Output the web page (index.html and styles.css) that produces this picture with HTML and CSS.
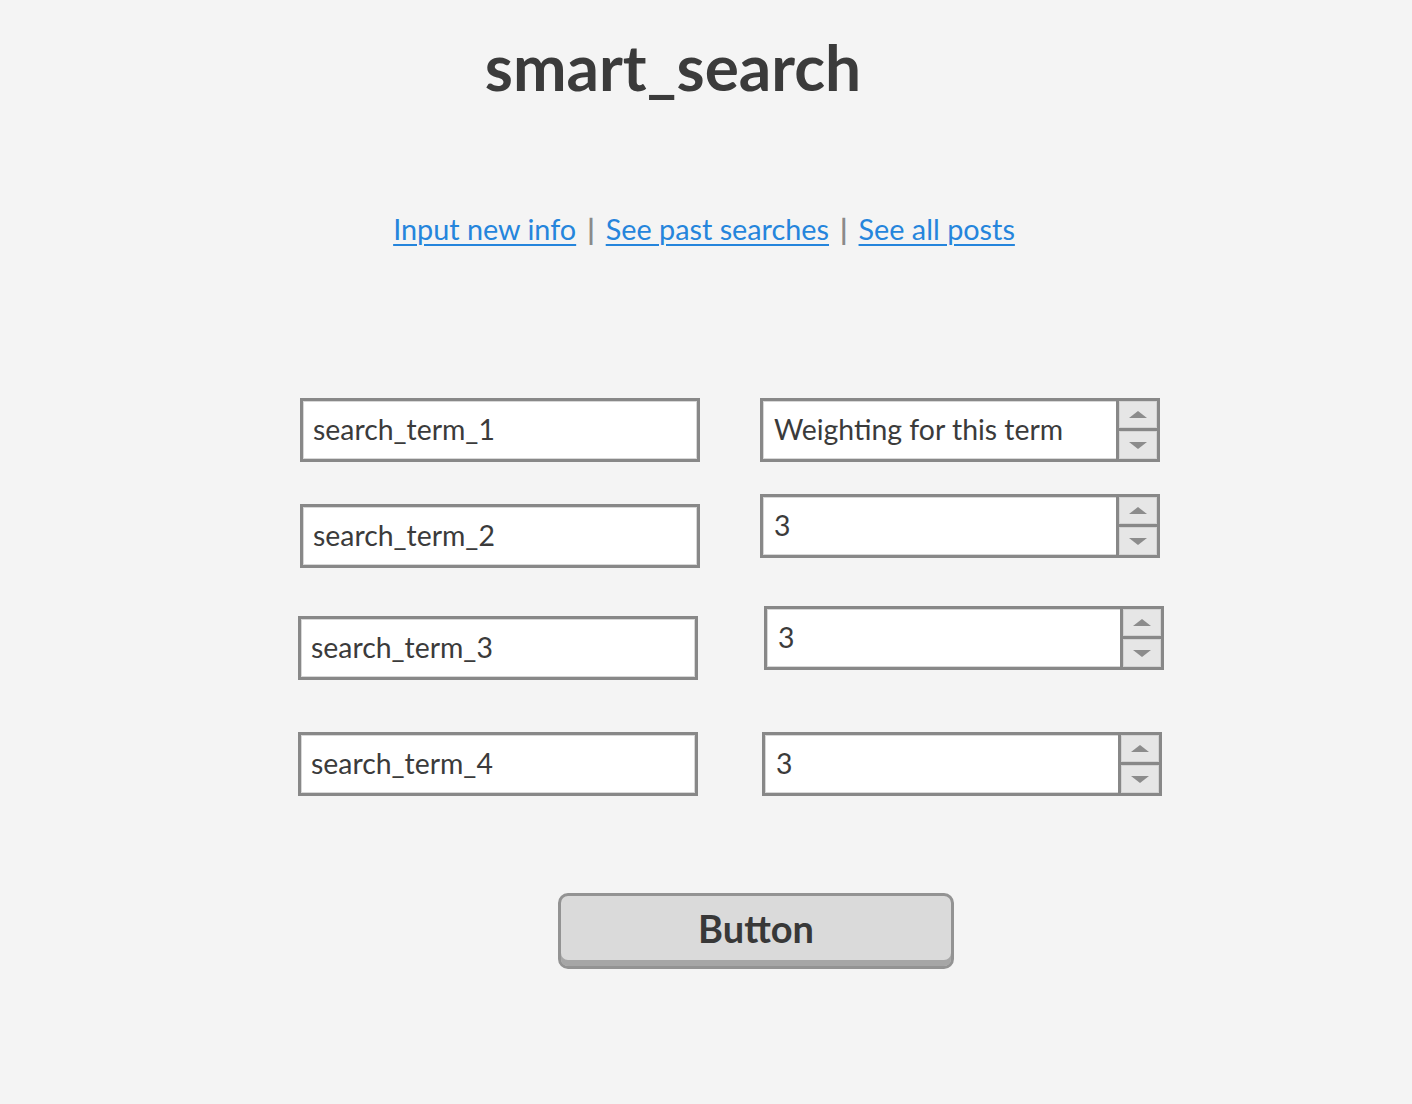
FILE: index.html
```html
<!DOCTYPE html>
<html lang="en">
<head>
<meta charset="utf-8">
<title>smart_search</title>
<link rel="stylesheet" href="styles.css">
</head>
<body>
<main class="page">
  <h1 class="title">smart_search</h1>
  <nav class="links">
    <a href="#">Input new info</a><span class="sep">|</span><a href="#">See past searches</a><span class="sep">|</span><a href="#">See all posts</a>
  </nav>
  <section class="form">
    <div class="col col-left">
      <div class="field f1">search_term_1</div>
      <div class="field f2">search_term_2</div>
      <div class="field f3">search_term_3</div>
      <div class="field f4">search_term_4</div>
    </div>
    <div class="col col-right">
      <div class="spin s1"><div class="val">Weighting for this term</div><div class="btns"><span class="up"></span><span class="down"></span></div></div>
      <div class="spin s2"><div class="val">3</div><div class="btns"><span class="up"></span><span class="down"></span></div></div>
      <div class="spin s3"><div class="val">3</div><div class="btns"><span class="up"></span><span class="down"></span></div></div>
      <div class="spin s4"><div class="val">3</div><div class="btns"><span class="up"></span><span class="down"></span></div></div>
    </div>
  </section>
  <div class="actions">
    <button class="btn" type="button">Button</button>
  </div>
</main>
</body>
</html>
```

FILE: styles.css
```css
* { box-sizing: border-box; }
html, body { margin: 0; padding: 0; }
body {
  background: #f4f4f4;
  color: #3b3b3b;
  font-family: Lato, "Open Sans", sans-serif;
  width: 1412px;
  height: 1104px;
  overflow: hidden;
}
.page { display: flex; flex-direction: column; }

.title {
  margin: 35px 0 0 0;
  padding-right: 66px;
  text-align: center;
  font-size: 64px;
  line-height: 1;
  font-weight: 700;
  color: #3b3b3b;
}

.links {
  margin-top: 116px;
  text-align: center;
  font-size: 28.8px;
  line-height: 1;
  padding-right: 4px;
}
.links a {
  color: #2585dc;
  text-decoration: underline;
  text-decoration-thickness: 2px;
  text-underline-offset: 4px;
}
.sep {
  color: #8a8a8a;
  font-weight: 700;
  margin: 0 11px;
}

.form {
  margin-top: 154px;
  display: flex;
  padding-left: 298px;
  gap: 60px;
}
.col { display: flex; flex-direction: column; width: 402px; }

.field, .spin {
  width: 400px;
  height: 64px;
  border: 3px solid #888;
  background: #fff;
  box-shadow: inset 0 0 0 1px #d8d8d8;
  font-size: 28.4px;
}
.field {
  display: flex;
  align-items: center;
  padding: 0 0 2px 10px;
}
.f1 { margin-left: 2px; }
.f2 { margin-left: 2px; margin-top: 42px; }
.f3 { margin-top: 48px; }
.f4 { margin-top: 52px; }

.spin { display: flex; }
.s1 { margin-left: 0; }
.s2 { margin-top: 32px; }
.s3 { margin-top: 48px; margin-left: 4px; }
.s4 { margin-top: 62px; margin-left: 2px; }

.val {
  flex: 1;
  display: flex;
  align-items: center;
  padding: 0 0 2px 11px;
  border-right: 3px solid #888;
}
.btns {
  width: 38px;
  display: flex;
  flex-direction: column;
}
.btns span {
  flex: 1;
  background: #e6e6e6;
  box-shadow: inset 0 0 0 1px #d4d4d4;
  display: flex;
  align-items: center;
  justify-content: center;
}
.btns .up { border-bottom: 3px solid #888; }
.btns .up::before {
  content: "";
  border-left: 9px solid transparent;
  border-right: 9px solid transparent;
  border-bottom: 7px solid #8c8c8c;
}
.btns .down::before {
  content: "";
  border-left: 9px solid transparent;
  border-right: 9px solid transparent;
  border-top: 7px solid #8c8c8c;
}

.actions {
  margin-top: 97px;
  padding-left: 558px;
}
.btn {
  width: 396px;
  height: 76px;
  border: 3px solid #939393;
  border-radius: 10px;
  background: #dadada;
  box-shadow: inset 0 -6px 0 #a6a6a6;
  font-family: Lato, "Open Sans", sans-serif;
  font-size: 38px;
  font-weight: 700;
  color: #383838;
  padding: 0 0 6px 0;
  cursor: pointer;
}
```
